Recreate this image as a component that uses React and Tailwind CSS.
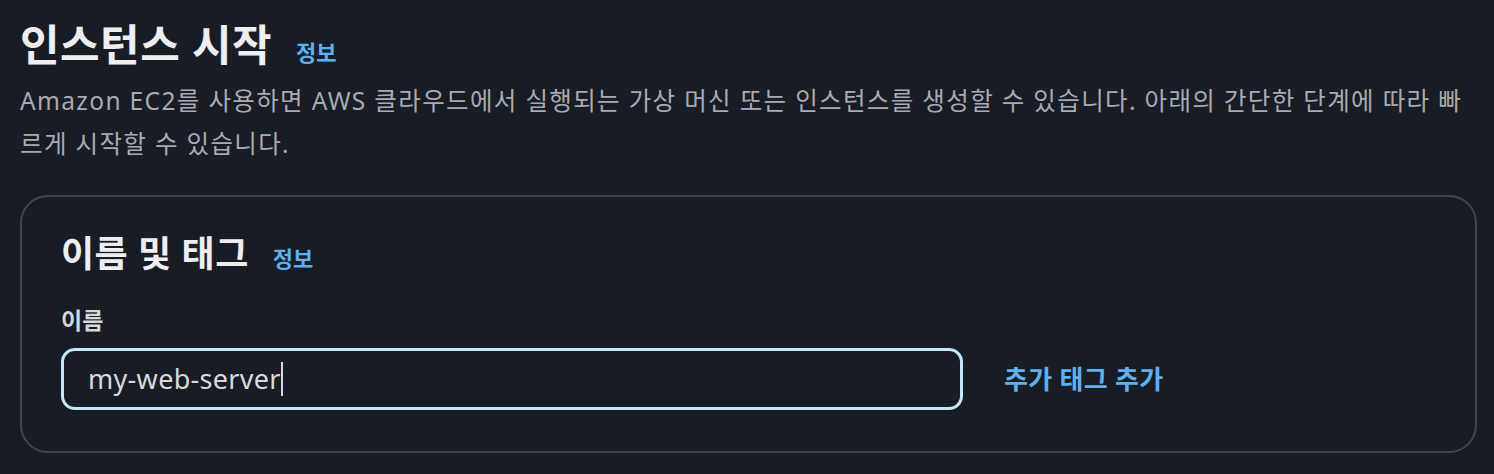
export default function App() {
  return (
    <div
      className="min-h-screen bg-[#181c24] px-5 pt-[15px] pb-5"
      style={{ fontFamily: '"Noto Sans", "Noto Sans CJK KR", sans-serif' }}
    >
      <div className="flex items-baseline gap-6">
        <h1 className="text-[43px] font-bold leading-[60px] tracking-[0.5px] text-[#eeeef0]">인스턴스 시작</h1>
        <a className="text-[22px] font-semibold text-[#5fb0f0]">정보</a>
      </div>
      <p className="mt-1 text-[24.5px] leading-[43px] tracking-[1.35px] text-[#a8abb3]">
        Amazon EC2를 사용하면 AWS 클라우드에서 실행되는 가상 머신 또는 인스턴스를 생성할 수 있습니다. 아래의 간단한 단계에 따라 빠르게 시작할 수 있습니다.
      </p>

      <div className="mt-[30px] mr-[-3px] rounded-[28px] border-2 border-[#43464d] px-[39px] pt-[35px] pb-[41px]">
        <div className="flex items-baseline gap-6">
          <h2 className="text-[36px] font-bold leading-[44px] tracking-[0.5px] text-[#eeeef0]">이름 및 태그</h2>
          <a className="text-[22px] font-semibold text-[#5fb0f0]">정보</a>
        </div>
        <label className="mt-[29px] block text-[23px] font-semibold leading-[30px] text-[#d5d6da]">이름</label>
        <div className="mt-[13px] flex items-center gap-[41px]">
          <div className="flex h-[62px] w-[902px] items-center rounded-[14px] border-[3px] border-[#c4e6fb] px-6">
            <span className="text-[27px] tracking-[0.3px] text-[#d8d9dd]">my-web-server</span>
            <span className="h-[34px] w-[2px] bg-[#d8d9dd]" />
          </div>
          <a className="text-[26px] font-semibold tracking-[0.3px] text-[#5fb0f0]">추가 태그 추가</a>
        </div>
      </div>
    </div>
  );
}
